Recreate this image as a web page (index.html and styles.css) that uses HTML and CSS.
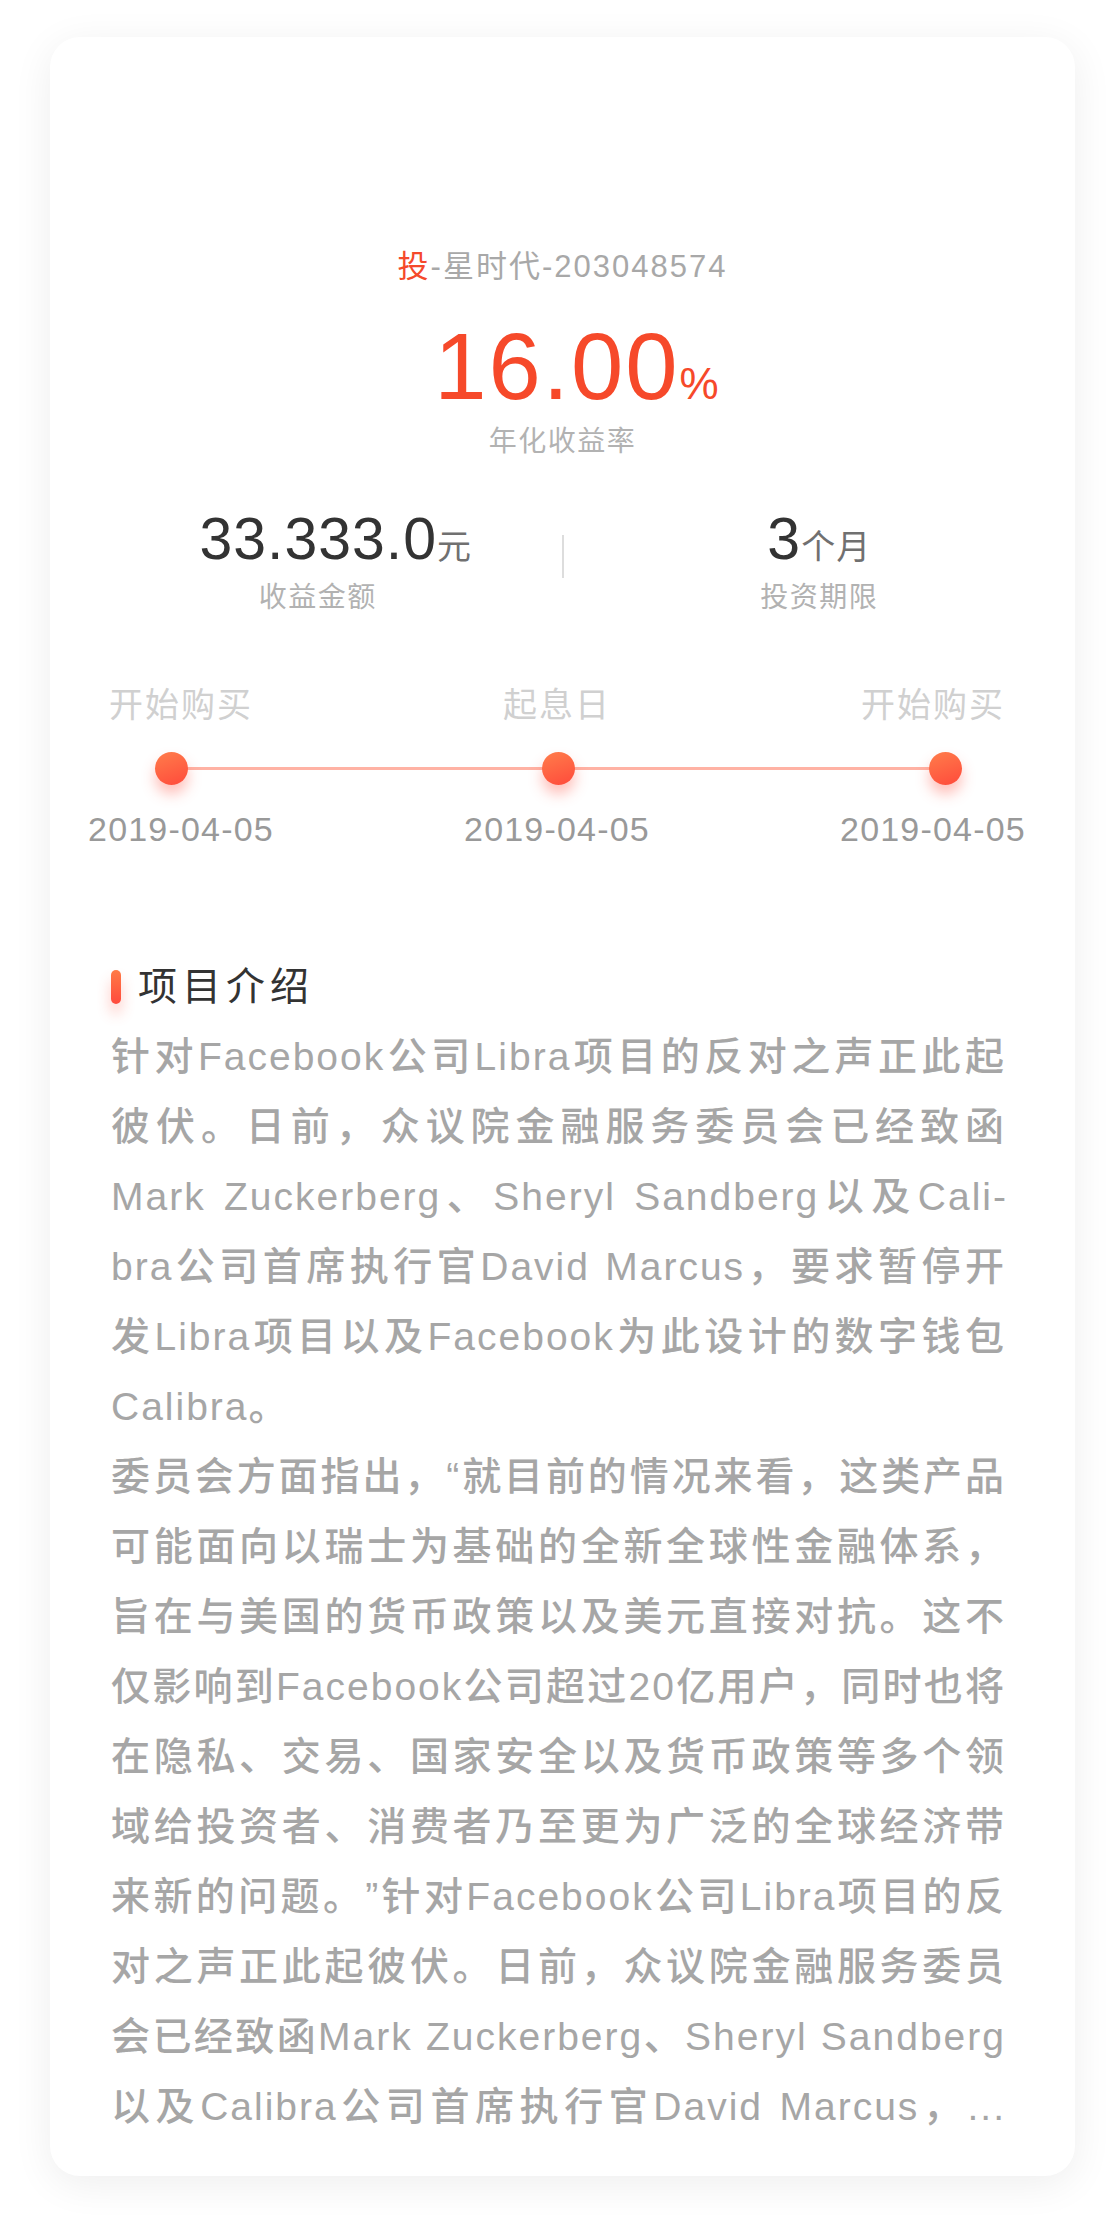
FILE: index.html
```html
<!DOCTYPE html>
<html lang="zh-CN">
<head>
<meta charset="utf-8">
<title>投-星时代-203048574</title>
<link rel="stylesheet" href="styles.css">
</head>
<body>
<div class="page">
  <div class="card">
    <div class="hero">
      <div class="code"><span class="code-tag">投</span>-星时代-203048574</div>
      <div class="rate"><span class="rate-num">16.00</span><span class="rate-unit">%</span></div>
      <div class="rate-label">年化收益率</div>
    </div>

    <div class="stats">
      <div class="stat stat-left">
        <div class="stat-value"><span class="stat-num">33.333.0</span><span class="stat-unit">元</span></div>
        <div class="stat-label">收益金额</div>
      </div>
      <div class="stat-divider"></div>
      <div class="stat stat-right">
        <div class="stat-value"><span class="stat-num">3</span><span class="stat-unit">个月</span></div>
        <div class="stat-label">投资期限</div>
      </div>
    </div>

    <div class="timeline">
      <div class="tl-row tl-labels">
        <span class="tl-cell">开始购买</span>
        <span class="tl-cell">起息日</span>
        <span class="tl-cell">开始购买</span>
      </div>
      <div class="tl-track">
        <span class="tl-dot"></span>
        <span class="tl-dot"></span>
        <span class="tl-dot"></span>
      </div>
      <div class="tl-row tl-dates">
        <span class="tl-cell">2019-04-05</span>
        <span class="tl-cell">2019-04-05</span>
        <span class="tl-cell">2019-04-05</span>
      </div>
    </div>

    <div class="intro">
      <h2 class="intro-title"><span class="intro-bar"></span><span class="intro-heading">项目介绍</span></h2>
      <div class="intro-body">
        <p class="intro-text">针对Facebook公司Libra项目的反对之声正此起彼伏。日前，众议院金融服务委员会已经致函Mark Zuckerberg、Sheryl Sandberg以及Cali&shy;bra公司首席执行官David Marcus，要求暂停开发Libra项目以及Facebook为此设计的数字钱包Calibra。</p>
        <p class="intro-text intro-text-more">委员会方面指出，“就目前的情况来看，这类产品可能面向以瑞士为基础的全新全球性金融体系，旨在与美国的货币政策以及美元直接对抗。这不仅影响到Facebook公司超过20亿用户，同时也将在隐私、交易、国家安全以及货币政策等多个领域给投资者、消费者乃至更为广泛的全球经济带来新的问题。”针对Facebook公司Libra项目的反对之声正此起彼伏。日前，众议院金融服务委员会已经致函Mark Zuckerberg、Sheryl Sandberg以及Calibra公司首席执行官David Marcus，...</p>
      </div>
    </div>
  </div>
</div>
</body>
</html>
```

FILE: styles.css
```css
* {
  box-sizing: border-box;
}

html, body {
  margin: 0;
  padding: 0;
  background: #ffffff;
}

body {
  font-family: "Liberation Sans", "Noto Sans CJK SC", sans-serif;
  text-autospace: no-autospace;
  text-spacing-trim: space-all;
}

.page {
  padding: 37px 45px 61px 50px;
}

.card {
  background: #ffffff;
  border-radius: 30px;
  box-shadow: 0 8px 40px rgba(0, 0, 0, 0.07);
  padding: 210px 0 34px 0;
}

/* hero */
.hero {
  text-align: center;
}

.code {
  font-size: 31px;
  line-height: 40px;
  letter-spacing: 2px;
  color: #a8a8a8;
}

.code-tag {
  color: #f5492b;
}

.rate {
  margin-top: 30px;
  padding-left: 28px;
  font-size: 94px;
  line-height: 100px;
  color: #f6492a;
  white-space: nowrap;
}

.rate-num {
  letter-spacing: 2px;
}

.rate-unit {
  font-size: 44px;
  line-height: 1;
}

.rate-label {
  margin-top: 7px;
  font-size: 28px;
  line-height: 36px;
  letter-spacing: 1.5px;
  color: #b2b2b2;
}

/* stats */
.stats {
  margin-top: 47px;
  display: grid;
  grid-template-columns: 1fr 2px 1fr;
}

.stat {
  text-align: center;
}

.stat-left {
  padding-left: 24px;
}

.stat-left .stat-value {
  padding-left: 36px;
}

.stat-value {
  font-size: 59px;
  line-height: 64px;
  white-space: nowrap;
}

.stat-num {
  letter-spacing: 1px;
  color: #333333;
}

.stat-unit {
  font-size: 34px;
  line-height: 1;
  letter-spacing: 1px;
  color: #707070;
}

.stat-label {
  margin-top: 9px;
  font-size: 28px;
  line-height: 36px;
  letter-spacing: 1.5px;
  color: #b2b2b2;
}

.stat-divider {
  align-self: start;
  margin-top: 28px;
  height: 43px;
  background: #dddddd;
}

/* timeline */
.timeline {
  margin-top: 69px;
}

.tl-row {
  display: flex;
  justify-content: space-between;
  margin: 0 42px 0 31px;
}

.tl-cell {
  width: 200px;
  text-align: center;
  white-space: nowrap;
}

.tl-labels {
  font-size: 34px;
  line-height: 40px;
  letter-spacing: 2px;
  color: #d0d0d0;
}

.tl-dates {
  margin-top: 24.5px;
  font-size: 34px;
  line-height: 40px;
  letter-spacing: 1.2px;
  color: #999999;
}

.tl-track {
  margin: 26.5px 113.5px 0 104.5px;
  height: 33px;
  display: flex;
  justify-content: space-between;
  background: linear-gradient(#ffb2a4, #ffb2a4) center / calc(100% - 33px) 3px no-repeat;
}

.tl-dot {
  width: 33px;
  height: 33px;
  border-radius: 50%;
  background: linear-gradient(160deg, #ff7d4b 0%, #ff4a3b 100%);
  box-shadow: 0 9px 14px rgba(255, 72, 55, 0.35);
}

/* intro */
.intro {
  margin-top: 113px;
  padding-left: 61px;
}

.intro-title {
  margin: 0;
  display: flex;
  align-items: center;
  gap: 17px;
  height: 50px;
  font-weight: 400;
}

.intro-bar {
  width: 10px;
  height: 34px;
  border-radius: 5px;
  background: linear-gradient(180deg, #ff7b46 0%, #ff4a3d 100%);
  box-shadow: 0 10px 14px rgba(255, 80, 60, 0.3);
}

.intro-heading {
  font-size: 39px;
  line-height: 50px;
  letter-spacing: 5px;
  color: #333333;
}

.intro-body {
  margin-top: 10px;
  width: 895px;
}

.intro-text {
  margin: 0;
  font-size: 39px;
  font-weight: 500;
  line-height: 70px;
  letter-spacing: 2px;
  color: #a6a6a6;
  text-align: justify;
}

.intro-text-more {
  text-align-last: justify;
}
```
